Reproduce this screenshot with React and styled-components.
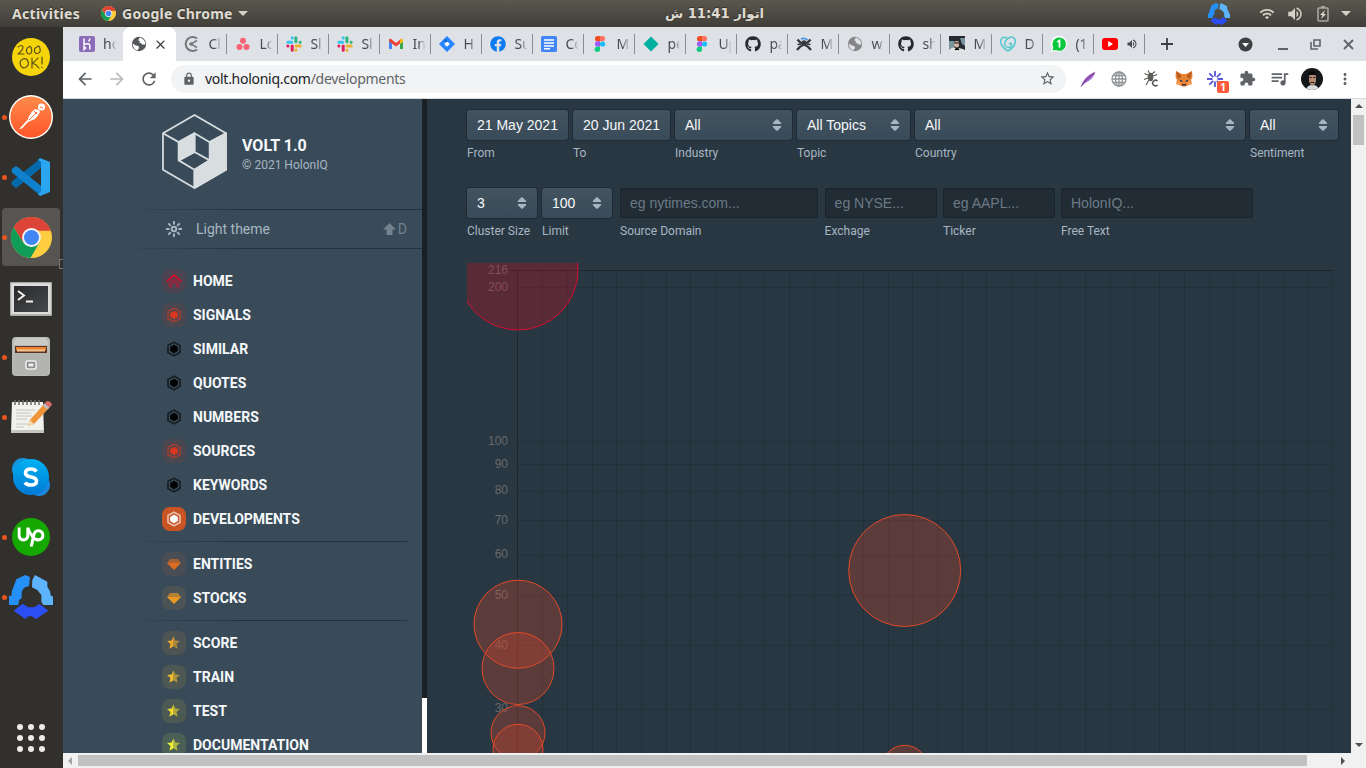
import React from "react";
import styled, { createGlobalStyle, css } from "styled-components";
import { FaGithub, FaFacebook } from "react-icons/fa";
import { SiUpwork } from "react-icons/si";
import {
  MdArrowBack, MdArrowForward, MdRefresh, MdLock, MdStarBorder, MdExtension,
  MdQueueMusic, MdMoreVert, MdVolumeUp, MdWifi, MdClose,
} from "react-icons/md";

const Global = createGlobalStyle`
  * { box-sizing: border-box; }
  html, body { margin: 0; height: 768px; overflow: hidden; }
  svg { display: block; flex: none; }
`;

const ui = `"Noto Sans", "Open Sans", sans-serif`;
const arial = `"Liberation Sans", Arial, sans-serif`;
const roboto = `Roboto, sans-serif`;

/* ---------- desktop shell ---------- */
const Desktop = styled.div`
  width: 1366px; height: 768px; display: flex; flex-direction: column; overflow: hidden;
  background: #32302c; font-family: ${ui};
`;
const TopBar = styled.header`
  height: 27px; flex: none; display: grid; grid-template-columns: 653px 120px 1fr; align-items: center;
  background: linear-gradient(#5a574e, #403e38); color: #dfdbd2;
  font: 700 14px/27px ${ui}; text-shadow: 0 -1px 1px rgba(0,0,0,.4);
`;
const TopLeft = styled.div`display: flex; align-items: center; padding-left: 12px; height: 27px;`;
const Activities = styled.span`width: 89px; letter-spacing: 0.3px; white-space: nowrap;`;
const AppName = styled.span`margin: 0 5px 0 6px; white-space: nowrap; letter-spacing: 0.25px;`;
const Clock = styled.div`
  direction: rtl; text-align: center; white-space: nowrap; font: bold 13.2px/27px "DejaVu Sans", sans-serif;
  padding-left: 3px;
`;
const TopRight = styled.div`display: flex; align-items: center; justify-content: flex-end; height: 27px; padding-right: 15px; color: #d5d1c8;`;
const Gap = styled.span`width: ${(p) => p.$w}px; flex: none;`;
const Caret = styled.i`border: 5px solid transparent; border-top-color: #d5d1c8; border-bottom: 0; width: 0; height: 0;`;
const Body = styled.div`display: flex; flex: 1; min-height: 0;`;

const Dock = styled.nav`
  width: 63px; flex: none; display: flex; flex-direction: column; background: #32302c;
`;
const DockItem = styled.div`
  position: relative; height: 60px; flex: none; padding: ${(p) => p.$drop || 0}px 1px 0 0; display: flex; align-items: center; justify-content: center;
  ${(p) => p.$active && css`
    &::after { content: ""; position: absolute; inset: 1px 3px 1px 2px; border-radius: 4px; background: #575551; }
  `}
  ${(p) => p.$running && css`
    &::before { content: ""; position: absolute; z-index: 2; left: 2px; top: 27.5px; width: 5px; height: 5px; border-radius: 50%; background: #e95420; }
  `}
  & > svg { position: relative; z-index: 1; }
`;
const EdgeMark = styled.i`position: absolute; z-index: 3; left: 59px; top: 52px; width: 4px; height: 10px; border: 1px solid #77756f; border-right: 0;`;
const DockSpacer = styled.div`flex: 1;`;
const Launcher = styled.div`
  display: grid; grid-template-columns: repeat(3, 6px); gap: 5px; justify-content: center; padding: 0 1px 16px 0;
  i { width: 6px; height: 6px; border-radius: 50%; background: #eeece9; }
`;

/* ---------- browser ---------- */
const Browser = styled.section`flex: 1; min-width: 0; display: flex; flex-direction: column; background: #fff;`;
const TabStrip = styled.div`height: 34px; flex: none; display: flex; align-items: center; background: #dee1e6; padding-left: 7px; font: 14px/34px ${ui}; color: #484b50;`;
const Tab = styled.div`
  width: ${(p) => p.$w || 51}px; height: 34px; flex: none; display: flex; align-items: center; padding-left: ${(p) => p.$pad || 8.4}px; gap: 8px; position: relative;
  ${(p) => p.$sep && css`&::after { content: ""; position: absolute; right: 0; top: 7px; width: 1px; height: 20px; background: #8a8d91; }`}
`;
const ActiveTab = styled(Tab)`
  width: 53px; padding-left: 8px; background: #fff; border-radius: 8px 8px 0 0; gap: 6px; color: #3c4043;
`;
const TabLabel = styled.span`
  width: 14px; white-space: nowrap;
  mask-image: linear-gradient(90deg, #000 45%, transparent 97%);
`;
const WinControls = styled.div`display: flex; align-items: center; flex: 1; color: #45484c;`;
const Toolbar = styled.div`height: 38px; flex: none; display: flex; align-items: center; padding: 0 12px 2px; color: #5f6368; border-bottom: 1px solid #d8dadd;`;
const UrlBar = styled.div`
  width: 895px; height: 28px; margin-left: 12px; border-radius: 14px; background: #f1f3f4; display: flex; align-items: center; padding: 0 10px 0 11px;
  font: 14px/28px ${ui}; color: #5f6368; white-space: nowrap;
`;
const Url = styled.span`margin-left: 9px; flex: 1; letter-spacing: -0.28px; b { font-weight: 400; color: #202124; }`;
const ExtBadge = styled.span`position: relative; display: flex;
  em { position: absolute; left: 10px; top: 10px; width: 12px; height: 12px; border-radius: 2px; background: #ff5c3c; color: #fff; font: bold 10px/12px ${ui}; text-align: center; }
`;

/* ---------- page ---------- */
const Viewport = styled.div`flex: 1; min-height: 0; display: flex;`;
const Page = styled.div`width: 1288px; display: flex; background: #293742; overflow: hidden;`;
const Side = styled.aside`width: 359px; flex: none; background: #394b59; overflow: hidden; font-family: ${roboto};`;
const SideTrack = styled.div`width: 5px; flex: none; background: linear-gradient(#1a2025 599px, #fff 599px);`;
const Brand = styled.div`height: 110px; padding: 15px 0 0 99px; display: flex; gap: 15px;`;
const BrandText = styled.div`padding-top: 22px; white-space: nowrap;
  h1 { margin: 0; font: bold 16px/19px ${roboto}; color: #f5f8fa; }
  p { margin: 2px 0 0; font: 12px/17px ${roboto}; color: #a7b6c2; }
`;
const fade = `linear-gradient(90deg, transparent 55px, #25333d 180px)`;
const ThemeRow = styled.div`
  height: 40px; display: flex; align-items: center; padding: 0 15px 0 103px; color: #a7b6c2; font: 14px/38px ${roboto};
  background: ${fade} top / 100% 1px no-repeat, ${fade} bottom / 100% 1px no-repeat;
  span { margin-left: 14px; flex: 1; }
`;
const Shortcut = styled.div`display: flex; align-items: center; gap: 2px; color: #72828f; font-size: 14px;`;
const Menu = styled.div`padding-top: 15px;`;
const MenuItem = styled.div`height: 34px; display: flex; align-items: center; gap: 7px; padding-left: 99px; font: bold 14px/34px ${roboto}; color: #f5f8fa;`;
const Chip = styled.i`width: 24px; height: 24px; border-radius: 8px; display: flex; align-items: center; justify-content: center; background: ${(p) => p.$bg};`;
const Divider = styled.div`height: 11px; margin-right: 15px; background: ${fade} 0 5px / 100% 1px no-repeat;`;

const Main = styled.main`flex: 1; min-width: 0; padding: 11px 13px 0 40px; display: flex; flex-direction: column; font-family: ${roboto};`;
const FilterRow = styled.div`display: flex; height: 78px; flex: none;`;
const Field = styled.div`width: ${(p) => p.$w}px; margin-right: ${(p) => p.$gap}px; flex: none;`;
const Label = styled.div`margin-top: 5px; font: 12px/16px ${roboto}; color: #a7b6c2; white-space: nowrap;`;
const SelectBox = styled.div`
  height: 30px; border-radius: 3px; display: flex; align-items: center; justify-content: space-between; padding: 0 10px;
  font: 14px/30px ${arial}; color: #f5f8fa; white-space: nowrap;
  background: linear-gradient(#43535f, #394b59); box-shadow: 0 0 0 1px #202b33;
`;
const InputBox = styled.div`
  height: 30px; border-radius: 3px; padding: 0 10px; font: 14px/30px ${arial}; color: #6c7a85; white-space: nowrap;
  background: #222c35; box-shadow: inset 0 0 0 1px #1b242c, inset 0 1px 1px rgba(16,22,26,.4);
`;
const Chart = styled.svg`margin-top: -3px; width: 871px; height: 490px;`;

const VBar = styled.div`
  width: 15px; flex: none; background: #f1f1f1; display: flex; flex-direction: column; align-items: center; padding: 5px 0 6px; justify-content: space-between;
`;
const VThumb = styled.div`width: 11px; height: 30px; margin-top: 7px; background: #c1c1c1;`;
const VTop = styled.div`display: flex; flex-direction: column; align-items: center;`;
const HBar = styled.div`
  height: 15px; flex: none; background: #f1f1f1; display: flex; align-items: center; padding-left: 5px;
`;
const HThumb = styled.div`width: 1229px; height: 11px; margin: 0 34px 0 6px; background: #c1c1c1;`;
const Arrow = styled.i`
  width: 0; height: 0; border: 4px solid transparent;
  ${(p) => p.$d === "up" && "border-top: 0; border-bottom-color: #505050;"}
  ${(p) => p.$d === "down" && "border-bottom: 0; border-top-color: #505050;"}
  ${(p) => p.$d === "left" && "border-left: 0; border-right-color: #a3a3a3;"}
  ${(p) => p.$d === "right" && "border-right: 0; border-left-color: #505050;"}
`;

/* ---------- icons ---------- */
const Chrome = ({ s }) => (
  <svg width={s} height={s} viewBox="0 0 48 48">
    <circle cx="24" cy="24" r="24" fill="#ffcd40" />
    <path d="M3.2 12A24 24 0 0 1 44.8 12L46.6 16H24L14 29.5Z" fill="#db4437" />
    <path d="M3.2 12A24 24 0 0 0 22.8 48L33.5 29.5 24 35 14 29.5Z" fill="#0f9d58" />
    <circle cx="24" cy="24" r="11" fill="#f4f4f4" /><circle cx="24" cy="24" r="8.8" fill="#4285f4" />
  </svg>
);
const Hub = ({ s }) => (
  <svg width={s} height={s} viewBox="0 0 132 132">
    <path d="M48 0 63 6 60 33 45 38 38 50V70L30 75 28 90H0V62H8V50L22 13Z" fill="#2490f8" />
    <path d="M78 0 115 20V35L124 50V60L132 65V90H103L97 80V60L85 45 69 37 70 15Z" fill="#5db4fd" />
    <path d="M14 107 41 86 58 97H76L91 86 118 107 81 132 68 124H58L49 132Z" fill="#2b4ef5" />
  </svg>
);
const Slack = () => (
  <svg width="16" height="16" viewBox="0 0 16 16" strokeWidth="3" strokeLinecap="round" fill="none">
    <path d="M1.800 6.200H5.800M6.200 1.700V2" stroke="#36c5f0" /><path d="M9.900 1.700V5.800M14 6.200h.2" stroke="#2eb67d" />
    <path d="M10 9.900h4.200M9.900 14v.2" stroke="#ecb22e" /><path d="M6.200 10v4.200M1.800 9.900H2" stroke="#e01e5a" />
  </svg>
);
const Figma = () => (
  <svg width="16" height="16" viewBox="0 0 16 16">
    <path d="M8 0H5.600a2.600 2.600 0 0 0 0 5.300H8Z" fill="#f24e1e" /><path d="M8 0h2.400a2.600 2.600 0 0 1 0 5.300H8Z" fill="#ff7262" />
    <path d="M8 5.300H5.600a2.600 2.600 0 0 0 0 5.300H8Z" fill="#a259ff" /><circle cx="10.600" cy="8" r="2.600" fill="#1abcfe" />
    <path d="M8 10.600H5.600A2.700 2.700 0 1 0 8 13.300Z" fill="#0acf83" />
  </svg>
);
const Heroku = () => (
  <svg width="16" height="16" viewBox="0 0 16 16"><rect width="16" height="16" rx="2" fill="#8b6bb8" />
    <path d="M5 2.500v6Q10.800 6.500 10.800 9.500V13.500M10.800 2.500Q10.800 4 9.600 5.500M5 10.500v3l1.600-1.500Z" stroke="#fff" strokeWidth="1.500" fill="none" /></svg>
);
const Clickup = () => (
  <svg width="16" height="16" viewBox="0 0 16 16" fill="none" stroke="#77797c">
    <path d="M13 2.500A7 7 0 1 0 13 13.500" strokeWidth="2" /><path d="M13 4.500 7 8l6 3.500" strokeWidth="1.500" /><circle cx="7" cy="8" r="1.300" fill="#77797c" /></svg>
);
const Asana = () => (
  <svg width="16" height="16" viewBox="0 0 16 16" fill="#fa6275"><circle cx="8" cy="4.800" r="3" /><circle cx="4.500" cy="11" r="3" /><circle cx="11.500" cy="11" r="3" /></svg>
);
const Gmail = () => (
  <svg width="16" height="16" viewBox="0 0 16 16">
    <path d="M1 4v9h3V6Z" fill="#4285f4" /><path d="M12 6v7h3V4Z" fill="#34a853" />
    <path d="M1 3.500 2.500 2.500 8 7l5.500-4.500L12 7.500 8 10.500 1 5.500Z" fill="#ea4335" /><path d="M12 4 13.500 2.500 15 4v2l-3 2Z" fill="#fbbc04" /></svg>
);
const Jira = () => (
  <svg width="16" height="16" viewBox="0 0 16 16"><path d="M8 0 16 8 8 16 0 8Z" fill="#2684ff" /><path d="M8 5.200 10.800 8 8 10.800 5.200 8Z" fill="#fff" /><path d="M5.500 3.500 8 6" stroke="#1259c3" strokeWidth="1.500" /></svg>
);
const Docs = () => (
  <svg width="16" height="16" viewBox="0 0 16 16"><rect width="16" height="16" rx="1.500" fill="#4285f4" /><path d="M3 4h10M3 7h10M3 10h10M3 12.700h6" stroke="#fff" strokeWidth="1.500" /></svg>
);
const Diamond = () => <svg width="16" height="16" viewBox="0 0 16 16"><path d="M8 .5 15.500 8 8 15.500.5 8Z" fill="#00b0a0" /></svg>;
const Ninja = () => (
  <svg width="16" height="16" viewBox="0 0 16 16" fill="none"><path d="M1.500 3.500Q4 7 8 8.500T15 14M14.500 3.500Q12 7 8 8.500T1 14" stroke="#34383c" strokeWidth="2.200" /><path d="M1.500 8.500 5 8M14.500 8.500 11 8" stroke="#34383c" strokeWidth="1.500" /><circle cx="8" cy="6.800" r="2.600" fill="#34383c" /><path d="M5 3q3-1.800 6.500 1" stroke="#4596e8" strokeWidth="1.800" /></svg>
);
const Photo = () => (
  <svg width="16" height="16" viewBox="0 0 16 16"><path fill="#252b30" d="M0 0h16v16H0z" /><path d="M0 5h5v6L0 14ZM11 2h5v8l-3-2Z" fill="#7895a0" /><path d="M5 6q3-2 5 0v4l-2 2-3-2Z" fill="#d1b6a6" /><path d="M0 14q5-5 7-1 4-2 9 1v2H0Z" fill="#e4e4e4" /><path d="M5 7h5M6 14l2-2 2 2" stroke="#111" strokeWidth="1.200" /></svg>
);
const Heart = () => (
  <svg width="16" height="16" viewBox="0 0 16 16" fill="none" stroke="#55c8ce" strokeWidth="1.500"><path d="M8 15C1 11-.5 5.500 1.500 2.800S6.500 1 8 3.200M8 15C15 11 16.500 5.500 14.500 2.800S8.500.5 5.800 4.500 6 11.500 8.500 11.500 11.500 9 11.500 7.500H8.800" /></svg>
);
const Whatsapp = () => (
  <svg width="16" height="16" viewBox="0 0 16 16"><path d="M0 16 1 11.500A8 8 0 1 1 5 15Z" fill="#fff" /><path d="M1.500 14.500 2.300 11.300A6.700 6.700 0 1 1 5 14Z" fill="#09c83c" /><path d="M6.300 6 8.500 4.500V11.500" stroke="#fff" strokeWidth="1.700" fill="none" /></svg>
);
const Youtube = () => <svg width="16" height="16" viewBox="0 0 16 16"><rect y="2" width="16" height="12" rx="3" fill="#f00" /><path d="M6.200 5 11 8l-4.800 3Z" fill="#fff" /></svg>;
const Globe = ({ c = "#55595e", bg = "#fff" }) => (
  <svg width="16" height="16" viewBox="0 0 16 16"><circle cx="8" cy="8" r="7.200" fill={c} />
    <path d="M9.500 1.500Q7 2.500 7.500 4.500L9 5.500 8.500 7H10l1 1.500L14.500 8.500Q14.500 4 9.500 1.500ZM1.500 7.500 5 9.500 7.500 10 8 12 6.500 14.300Q2 13 1.500 7.500Z" fill={bg} /></svg>
);
const Battery = () => (
  <svg width="14" height="18" viewBox="0 0 14 18"><path d="M5 1h4v2H5z" fill="#a9a69e" /><rect x="2" y="3" width="10" height="13" rx="1" fill="none" stroke="#a9a69e" strokeWidth="1.600" /><path d="M9 5 4 10h2.500L5 14l5-5H7.500Z" fill="#e0ddd5" /></svg>
);

const Sticker = () => (
  <svg width="38" height="38" viewBox="0 0 38 38"><circle cx="19" cy="19" r="19" fill="#f5d40c" />
    <g fill="none" stroke="#5d5016" strokeWidth="1.200" strokeLinecap="round" strokeLinejoin="round">
      <path d="M6 9q4-3 5 0 0 3-5 7h6M17 9q-3 1-2.500 4t3 3q3-1 2-5T17 9M25 9q-3 1-2.500 4t3 2.500q3.500-1 2.500-5T25 9" />
      <path d="M11 21q-4 2-2.500 6t5 2.500q4-2 2.500-6t-5-2.500M20 20v10M26 20q-3 4-6 5 4 1 7 5M30 19v7M30 29v.6" />
    </g></svg>
);
const Postman = () => (
  <svg width="44" height="44" viewBox="0 0 44 44"><defs><linearGradient id="pm" x2="0" y2="1"><stop stopColor="#ff8a4a" /><stop offset="1" stopColor="#ff562b" /></linearGradient></defs>
    <circle cx="22" cy="22" r="22" fill="#fff" /><circle cx="22" cy="22" r="20.600" fill="url(#pm)" />
    <circle cx="32.500" cy="12" r="3.600" fill="#fff" /><path d="M30 15 26 14Q20 19 18.500 25L10 34l3-.5L19 27l7-3Q29 21 31 17Z" fill="#fff" />
    <path d="m25 16 3 3M20 25l8-8M31 12l3 1" stroke="#ff6c37" strokeWidth="1" /></svg>
);
const VsCode = () => (
  <svg width="40" height="40" viewBox="0 0 40 40">
    <path d="M1 28 4 30.500q1 .5 2 0L30 11V1L1 24.500Q0 26.500 1 28Z" fill="#0569ab" /><path d="M1 12 4 9.500q1-.5 2 0L30 29v10L1 15.500Q0 13.500 1 12Z" fill="#0f80cc" />
    <path d="M29 1 39 5V35L29 39 27 37 30 35V5L27 3Z" fill="#2aa5ef" /></svg>
);
const Terminal = () => (
  <svg width="42" height="34" viewBox="0 0 42 34"><defs><linearGradient id="tg" x2="1" y2="1"><stop stopColor="#28292a" /><stop offset="1" stopColor="#47494a" /></linearGradient></defs>
    <rect width="42" height="34" rx="1" fill="#a9a9a9" /><rect x="1.200" y="1.200" width="39.600" height="31" fill="#dedede" /><rect x="4" y="4" width="34" height="26" fill="url(#tg)" />
    <path d="m8 9 6 4.500-6 4.500M16 19.500h7" stroke="#f2f2f2" strokeWidth="2" fill="none" /></svg>
);
const Files = () => (
  <svg width="38" height="40" viewBox="0 0 38 40"><rect width="38" height="39" rx="4" fill="#b9b9b7" /><path d="M4 1h30l3 7H1Z" fill="#c9c9c7" /><rect x="3" y="9" width="32" height="9" fill="#5a3620" />
    <path d="M4 10h30v3H4z" fill="#e98534" /><path d="M5 12.500h28v2H5z" fill="#f8c58d" /><path d="M1 16h36v19q0 3-3 3H4q-3 0-3-3Z" fill="#b3b3b1" />
    <rect x="14" y="24" width="10" height="8" rx="2" fill="#8d8d8b" stroke="#eee" strokeWidth="1.500" /><rect x="16.500" y="26.500" width="5" height="3" fill="#eee" /></svg>
);
const Notes = () => (
  <svg width="42" height="36" viewBox="0 0 42 36"><path d="M2 3h31l1 31H1Z" fill="#f1f1ee" /><path d="M1 31h33v3H1Z" fill="#c5c4be" />
    <path d="M5 1v5M9 1v5M13 1v5M17 1v5M21 1v5M25 1v5M29 1v5" stroke="#6b6b68" strokeWidth="1.500" /><path d="M6 11h19M6 14h15M6 17h16M6 20h11M6 25h12M6 28h8" stroke="#c6c6c2" />
    <path d="m18 27 2-6L34 5l5 4-15 16Z" fill="#f0943a" /><path d="m18 27 2-6 4 4Z" fill="#f3d9ad" /><path d="m34 5 3-3q4 0 5 4l-3 3Z" fill="#dd6c65" /><path d="m32.500 6.500 2-2 5 4-2 2Z" fill="#bbb" /></svg>
);
const Skype = () => (
  <svg width="38" height="38" viewBox="0 0 38 38"><defs><linearGradient id="sk" x2="0" y2="1"><stop stopColor="#00b2f2" /><stop offset="1" stopColor="#0078d4" /></linearGradient></defs>
    <circle cx="11" cy="11" r="11" fill="#1296dd" /><circle cx="27" cy="27" r="11" fill="#1b86dc" /><circle cx="19" cy="19" r="18" fill="url(#sk)" />
    <path d="M24.500 13.500q-2-2.500-5.500-2.500-5.500 0-5.500 4 0 3 5.500 4t5.500 4q0 4-5.500 4-4.500 0-6-2.500" fill="none" stroke="#fff" strokeWidth="3.600" /></svg>
);
const UpworkIcon = () => (
  <svg width="38" height="38" viewBox="0 0 38 38"><circle cx="19" cy="19" r="19" fill="#14a800" /><SiUpwork x="5.5" y="5.5" size="27" color="#fff" /></svg>
);
const Cube = () => (
  <svg width="65" height="75" viewBox="0 0 66 76" fill="none" stroke="#d8dde0" strokeWidth="1.800" strokeLinejoin="round">
    <path d="M33 1 65 19.500V56.500L33 75 1 56.500V19.500Z" /><path d="M1 19.500 17 28.500 33 19.500 48.500 28.500 65 19.500M17 28.500V47L33 56.500 48.500 47V28.500M33 19.500V38.500M17 47 33 38.500 48.500 47M33 56.500V75" />
    <path d="M17 28.500 33 19.500V38.500L17 47Z" fill="#d8dde0" /><path d="M65 19.500V56.500L33 75V56.500L48.500 47V28.500Z" fill="#d8dde0" />
  </svg>
);
const Sun = () => (
  <svg width="16" height="16" viewBox="0 0 16 16" fill="none" stroke="#a7b6c2" strokeWidth="1.900"><circle cx="8" cy="8" r="2.300" />
    <path d="M8 0v3.500M8 12.500V16M0 8h3.500M12.500 8H16M2.300 2.300l2.500 2.500M11.200 11.200l2.500 2.500M13.700 2.300l-2.500 2.500M4.800 11.200l-2.500 2.500" /></svg>
);
const Shift = () => <svg width="13" height="12" viewBox="0 0 13 12"><path d="M6.500 0 13 6.500H9.500V12h-6V6.500H0Z" fill="#72828f" /></svg>;
const Hex = ({ c }) => (
  <svg width="16" height="16" viewBox="0 0 16 16"><path d="M8 1.300 14 4.600v6.800L8 14.700 2 11.400V4.600Z" fill="none" stroke={c} strokeWidth="1.700" opacity=".6" /><path d="M8 4.300 11.300 6.200v3.600L8 11.700 4.700 9.800V6.200Z" fill={c} stroke={c} strokeWidth="1.100" /></svg>
);
const Home = () => (
  <svg width="16" height="16" viewBox="0 0 16 16"><path d="M2.500 9.500 8 5 13.500 9.500v5H9.500v-4h-3v4h-4Z" fill="#c8102e" opacity=".5" /><path d="M.7 8.500 8 2l7.300 6.500" stroke="#cc102e" strokeWidth="2" fill="none" /></svg>
);
const Gem = ({ c }) => <svg width="16" height="16" viewBox="0 0 16 16" fill={c}><path d="M4 3h8l3 4H1Z" opacity=".65" /><path d="M1 7h14l-7 7Z" /></svg>;
const Star = ({ c }) => (
  <svg width="16" height="16" viewBox="0 0 16 16" fill={c}><path d="M7.500 1.200 5.600 5.600 1 6 4.500 9.100 3.400 13.800 7.500 11.300Z" /><path d="M7.500 1.200 9.400 5.600 14 6 10.500 9.100 11.600 13.800 7.500 11.300Z" opacity=".6" /></svg>
);
const DoubleCaret = () => <svg width="10" height="12" viewBox="0 0 10 12"><path d="M1 5 .8 4 4.200.5q.8-.6 1.600 0L9.200 4 9 5ZM1 7h8l.2 1-3.400 3.500q-.8.600-1.600 0L.8 8Z" fill="#a7b6c2" /></svg>;
const Bug = () => (
  <svg width="17" height="17" viewBox="0 0 17 17" fill="none" stroke="#5c5c58" strokeWidth="1.200"><ellipse cx="7.500" cy="7" rx="2.300" ry="3.600" fill="#5c5c58" /><path d="M5 5 1.500 3.500M5 8l-4 1.500M6 10l-3 5M9 4l3-2.500M10 6l4-1.500M6.500 3 5 .5" /><path d="M14.500 11a2.800 2.800 0 1 0 0 4" strokeWidth="1.600" /></svg>
);
const Fox = () => (
  <svg width="18" height="17" viewBox="0 0 18 17"><path d="M1 1 7 4h4l6-3 .5 6L16 10l1 4-4 1.500-2 1H7l-2-1L1 14l1-4L.5 7Z" fill="#e98336" /><path d="M1 1 7 6l-4 3Zm16 0-6 5 4 3Z" fill="#b85a20" /><path d="M4.500 9.500 8 11l-2 1Zm9 0L10 11l2 1ZM7 14h4v1.500H7Z" fill="#2d3442" /><path d="m1 14 3-3 2 4ZM17 14l-3-3-2 4Z" fill="#f4a259" /></svg>
);
const Quill = () => <svg width="16" height="16" viewBox="0 0 16 16"><path d="M1 15.500Q3 6 15.500.5 14 8 5 12Z" fill="#a56ac8" /><path d="M1 15.500Q6 8 14 2" stroke="#5f2c8c" fill="none" /></svg>;
const Grid = () => <svg width="16" height="16" viewBox="0 0 16 16" fill="none" stroke="#909497" strokeWidth="1.300"><circle cx="8" cy="8" r="7" /><ellipse cx="8" cy="8" rx="3.500" ry="7" /><path d="M8 1v14M1 8h14M2 4.500h12M2 11.500h12" /></svg>;
const Burst = () => <svg width="16" height="16" viewBox="0 0 16 16" stroke="#5756d8" strokeWidth="1.800"><path d="M8 0v5.500M8 10.500V16M0 8h5.500M10.500 8H16M2.300 2.300 6.200 6.200M9.800 9.800l3.900 3.900M13.700 2.300 9.800 6.200M6.200 9.800l-3.900 3.900" /></svg>;
const Avatar = () => (
  <svg width="22" height="22" viewBox="0 0 22 22"><clipPath id="av"><circle cx="11" cy="11" r="11" /></clipPath><g clipPath="url(#av)"><path fill="#14181b" d="M0 0h22v22H0z" /><path d="M5 22q1-5 6.500-5t6.500 5Z" fill="#d7dce0" /><path d="M8 7h7v6q-1 4-3.500 5Q9 17 8 13Z" fill="#b48a72" /><path d="M7.500 8q0-5 4-5t4 5l-2-1.500H9.500Z" fill="#090909" /><path d="M8.500 9.500h2.200M12.300 9.500h2.200M9.500 14.500h4" stroke="#222" strokeWidth="1.100" /></g></svg>
);

/* ---------- data ---------- */
const tabs = [
  [<Clickup />, "Cl"], [<Asana />, "Lo"], [<Slack />, "Sl"], [<Slack />, "Sl"], [<Gmail />, "In"], [<Jira />, "H"],
  [<FaFacebook size="16" color="#0d7cf2" />, "Su"], [<Docs />, "Co"], [<Figma />, "M"], [<Diamond />, "pe"], [<Figma />, "Up"],
  [<FaGithub size="16" color="#24292e" />, "pa"], [<Ninja />, "M"], [<Globe c="#858585" bg="#dee1e6" />, "w"], [<FaGithub size="16" color="#24292e" />, "sh"],
  [<Photo />, "M"], [<Heart />, "D"], [<Whatsapp />, "(1"], [<Youtube />, null],
];
const menu = [
  ["HOME", "#4b4552", <Home />], ["SIGNALS", "#4b4751", <Hex c="#d5371f" />], ["SIMILAR", "transparent", <Hex c="#000" />],
  ["QUOTES", "transparent", <Hex c="#000" />], ["NUMBERS", "transparent", <Hex c="#000" />], ["SOURCES", "#4b4751", <Hex c="#d5371f" />],
  ["KEYWORDS", "transparent", <Hex c="#000" />], ["DEVELOPMENTS", "#c85423", <Hex c="#fff" />], null,
  ["ENTITIES", "#4a4e54", <Gem c="#dc6b20" />], ["STOCKS", "#4c5354", <Gem c="#ea9a24" />], null,
  ["SCORE", "#4d5453", <Star c="#edaa2b" />], ["TRAIN", "#4d5753", <Star c="#f0bd2b" />], ["TEST", "#4c5a53", <Star c="#f1dc2e" />],
  ["DOCUMENTATION", "#4c5f57", <Star c="#eef035" />],
];
const ticks = [216, 200, 100, 90, 80, 70, 60, 50, 40, 30];
const exactY = (v) => 178 - 222.3 * Math.log(v / 100);
const tickY = (v) => Math.round(exactY(v)) + 0.5;
const columns = Array.from({ length: 34 }, (_, i) => 50.5 + Math.ceil(i * 24.68));
const bubbles = [
  [51, 7, 60, "#cb0d21", "#d50f30"], [51, 361.2, 44, "#d4462a", "#e24a28"], [51, 405.5, 36, "#d4462a", "#e24a28"],
  [51, 469.7, 27, "#d4462a", "#e24a28"], [51, 486.3, 25, "#d4462a", "#e24a28"], [437.7, 307.5, 56, "#d4462a", "#e24a28"],
  [437.7, 505.3, 23, "#d4462a", "#e24a28"],
];

const Select = ({ w, gap = 5, value, label, plain }) => (
  <Field $w={w} $gap={gap}><SelectBox>{value}{!plain && <DoubleCaret />}</SelectBox><Label>{label}</Label></Field>
);
const Input = ({ w, gap, hint, label }) => (
  <Field $w={w} $gap={gap}><InputBox>{hint}</InputBox><Label>{label}</Label></Field>
);

export default function App() {
  return (
    <Desktop>
      <Global />
      <TopBar>
        <TopLeft>
          <Activities>Activities</Activities><Chrome s={15} /><AppName>Google Chrome</AppName><Caret />
        </TopLeft>
        <Clock>اتوار 11:41 ش</Clock>
        <TopRight>
          <Hub s={22} /><Gap $w={29} /><MdWifi size="16" /><Gap $w={11} /><MdVolumeUp size="18" /><Gap $w={12} />
          <Battery /><Gap $w={11} /><Caret />
        </TopRight>
      </TopBar>
      <Body>
        <Dock>
          <DockItem><Sticker /></DockItem>
          <DockItem $running><Postman /></DockItem>
          <DockItem $running><VsCode /></DockItem>
          <DockItem $running $active><Chrome s={41} /><EdgeMark /></DockItem>
          <DockItem $drop={3}><Terminal /></DockItem>
          <DockItem $running><Files /></DockItem>
          <DockItem $running><Notes /></DockItem>
          <DockItem><Skype /></DockItem>
          <DockItem $running><UpworkIcon /></DockItem>
          <DockItem $running><Hub s={44} /></DockItem>
          <DockSpacer />
          <Launcher>{Array.from({ length: 9 }, (_, i) => <i key={i} />)}</Launcher>
        </Dock>
        <Browser>
          <TabStrip>
            <Tab $w={53} $pad={9}><Heroku /><TabLabel>ho</TabLabel></Tab>
            <ActiveTab><Globe /><MdClose size="15" /></ActiveTab>
            {tabs.map(([icon, text], i) => (
              <Tab key={i} $sep>{icon}{text ? <TabLabel>{text}</TabLabel> : <MdVolumeUp size="12" />}</Tab>
            ))}
            <WinControls>
              <Gap $w={15} />
              <svg width="14" height="14" viewBox="0 0 14 14" stroke="#3c4043" strokeWidth="1.800"><path d="M7 1v12M1 7h12" /></svg>
              <Gap $w={64} />
              <svg width="15" height="15" viewBox="0 0 15 15"><circle cx="7.500" cy="7.500" r="7" fill="#3c4043" /><path d="M4 6h7l-3.500 4Z" fill="#fff" /></svg>
              <Gap $w={25} />
              <svg width="11" height="12" viewBox="0 0 11 12"><path d="M0 11h10" stroke="#5f6368" strokeWidth="2" /></svg>
              <Gap $w={21} />
              <svg width="11" height="11" viewBox="0 0 11 11" fill="none" stroke="#5f6368" strokeWidth="1.600"><path d="M4 1h6v6H4zM1 3v7h7" /></svg>
              <Gap $w={22} />
              <svg width="11" height="11" viewBox="0 0 11 11" stroke="#5f6368" strokeWidth="1.800"><path d="m1 1 9 9M10 1l-9 9" /></svg>
            </WinControls>
          </TabStrip>
          <Toolbar>
            <MdArrowBack size="20" /><Gap $w={12} /><MdArrowForward size="20" color="#b9bbbe" /><Gap $w={12} /><MdRefresh size="20" />
            <UrlBar><MdLock size="14" /><Url><b>volt.holoniq.com</b>/developments</Url><MdStarBorder size="17" /></UrlBar>
            <Gap $w={14} /><Quill /><Gap $w={15} /><Grid /><Gap $w={16} /><Bug /><Gap $w={15} /><Fox /><Gap $w={14} />
            <ExtBadge><Burst /><em>1</em></ExtBadge><Gap $w={16} /><MdExtension size="17" /><Gap $w={13} /><MdQueueMusic size="21" /><Gap $w={11} />
            <Avatar /><Gap $w={13} /><MdMoreVert size="18" />
          </Toolbar>
          <Viewport>
            <Page>
              <Side>
                <Brand><Cube /><BrandText><h1>VOLT 1.0</h1><p>© 2021 HolonIQ</p></BrandText></Brand>
                <ThemeRow><Sun /><span>Light theme</span><Shortcut><Shift />D</Shortcut></ThemeRow>
                <Menu>
                  {menu.map((m, i) => m ? <MenuItem key={i}><Chip $bg={m[1]}>{m[2]}</Chip>{m[0]}</MenuItem> : <Divider key={i} />)}
                </Menu>
              </Side>
              <SideTrack />
              <Main>
                <FilterRow>
                  <Select w={101} value="21 May 2021" label="From" plain />
                  <Select w={97} value="20 Jun 2021" label="To" plain />
                  <Select w={117} value="All" label="Industry" />
                  <Select w={113} value="All Topics" label="Topic" />
                  <Select w={330} value="All" label="Country" />
                  <Select w={88} gap={0} value="All" label="Sentiment" />
                </FilterRow>
                <FilterRow>
                  <Select w={70} value="3" label="Cluster Size" />
                  <Select w={70} gap={8} value="100" label="Limit" />
                  <Input w={198} gap={6.6} hint="eg nytimes.com..." label="Source Domain" />
                  <Input w={112} gap={6.4} hint="eg NYSE..." label="Exchage" />
                  <Input w={112} gap={6} hint="eg AAPL..." label="Ticker" />
                  <Input w={192} gap={0} hint="HolonIQ..." label="Free Text" />
                </FilterRow>
                <Chart viewBox="0 0 871 490">
                  <g stroke="#22303a" shapeRendering="crispEdges">
                    {columns.map((x, i) => <line key={x} x1={x} x2={x} y1="7" y2="490" stroke={i ? undefined : "#1b262e"} />)}
                    {ticks.map((v, i) => <line key={v} x1={i ? 50 : 41} x2="866" y1={tickY(v)} y2={tickY(v)} stroke={i ? undefined : "#1b262e"} />)}
                  </g>
                  <g fill="#666a6c" fontFamily="Liberation Sans, Arial, sans-serif" fontSize="12" textAnchor="end">
                    {ticks.map((v) => <text key={v} x="41" y={Math.floor(exactY(v) + 0.35) + 4}>{v}</text>)}
                  </g>
                  {bubbles.map(([x, y, r, fill, line], i) => <circle key={i} cx={x} cy={y} r={r} fill={fill} fillOpacity={0.3} stroke={line} />)}
                </Chart>
              </Main>
            </Page>
            <VBar><VTop><Arrow $d="up" /><VThumb /></VTop><Arrow $d="down" /></VBar>
          </Viewport>
          <HBar><Arrow $d="left" /><HThumb /><Arrow $d="right" /></HBar>
        </Browser>
      </Body>
    </Desktop>
  );
}
